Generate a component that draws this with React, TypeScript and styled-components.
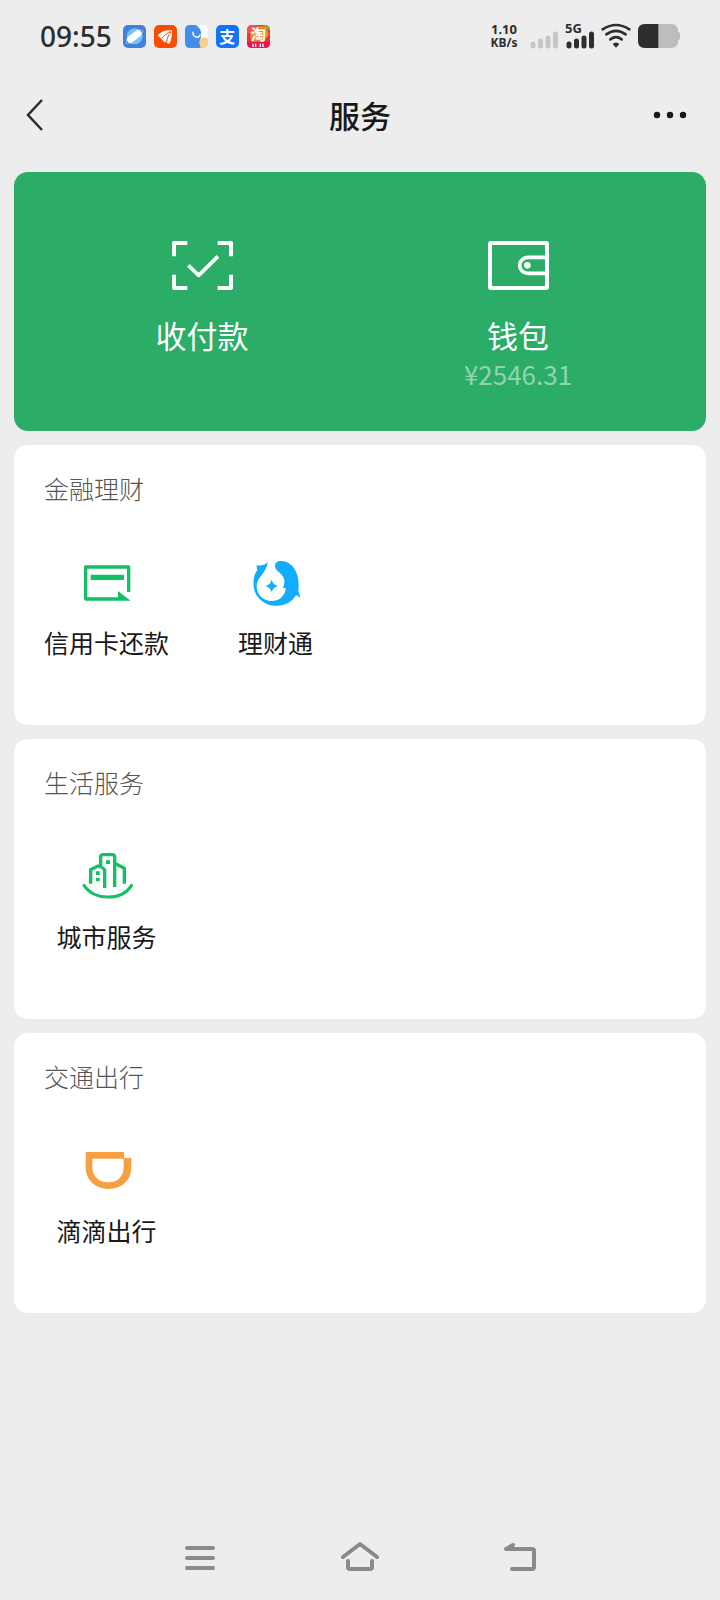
import React from "react";
import styled, { createGlobalStyle } from "styled-components";

const GlobalStyle = createGlobalStyle`
  * { box-sizing: border-box; }
  body {
    margin: 0;
    background: #ededed;
    color: #191919;
    font-family: "Noto Sans CJK SC", "Noto Sans", sans-serif;
  }
  button { border: 0; padding: 0; background: none; color: inherit; font: inherit; cursor: pointer; }
  a { color: inherit; text-decoration: none; }
  svg { display: block; overflow: visible; }
`;

const Page = styled.div`
  min-height: 100vh;
  display: flex;
  flex-direction: column;
`;

const StatusBar = styled.div`
  height: 72px;
  padding: 0 40px;
  display: flex;
  align-items: center;
  justify-content: space-between;
  color: #2e2e2e;
`;

const StatusGroup = styled.div<{ $gap: number }>`
  display: flex;
  align-items: center;
  gap: ${(p) => p.$gap}px;
`;

const Clock = styled.time`
  font: 500 28px/36px "Noto Sans", sans-serif;
  margin-right: 3px;
`;

const AppBadge = styled.span<{ $bg: string }>`
  width: 23px;
  height: 23px;
  border-radius: 5px;
  background: ${(p) => p.$bg};
  color: #fff;
  font-size: 16px;
  font-weight: 700;
  line-height: 23px;
  text-align: center;
`;

const NetSpeed = styled.div`
  width: 28px;
  margin-right: 4px;
  font-family: "Noto Sans", sans-serif;
  font-weight: 700;
  text-align: center;
`;

const SpeedLine = styled.div<{ $size: number }>`
  font-size: ${(p) => p.$size}px;
  line-height: 13px;
`;

const Header = styled.header`
  height: 86px;
  display: grid;
  grid-template-columns: 1fr auto 1fr;
  align-items: center;
`;

const Title = styled.h1`
  margin: 0;
  font-size: 31px;
  line-height: 40px;
  font-weight: 500;
`;

const BackButton = styled.button`
  justify-self: start;
  margin-left: 24px;
`;

const MoreButton = styled.button`
  justify-self: end;
  margin-right: 34px;
`;

const Main = styled.main`
  flex: 1;
  padding: 14px;
  display: flex;
  flex-direction: column;
  gap: 14px;
`;

const PayCard = styled.section`
  min-height: 259px;
  padding: 69px 30px 0;
  display: grid;
  grid-template-columns: 1fr 1fr;
  border-radius: 14px;
  background: #2bad67;
  color: #fff;
`;

const PayLink = styled.a`
  display: flex;
  flex-direction: column;
  align-items: center;
`;

const PayLabel = styled.span`
  margin-top: 25px;
  font-size: 31px;
  line-height: 40px;
`;

const Amount = styled.span`
  font-size: 26px;
  line-height: 38px;
  color: #91d4ae;
`;

const Card = styled.section`
  padding: 25px 8px 65px;
  border-radius: 14px;
  background: #fff;
`;

const CardTitle = styled.h2`
  margin: 0 0 53px;
  padding-left: 22px;
  font-size: 25px;
  line-height: 36px;
  font-weight: 300;
  color: #555;
`;

const ServiceGrid = styled.div`
  display: grid;
  grid-template-columns: repeat(4, 1fr);
`;

const ServiceLink = styled.a`
  display: flex;
  flex-direction: column;
  align-items: center;
  gap: 17px;
  font-size: 25px;
  line-height: 36px;
  white-space: nowrap;
`;

const NavBar = styled.nav`
  height: 86px;
  display: flex;
  justify-content: center;
`;

const NavButton = styled.button`
  width: 160px;
  display: flex;
  align-items: center;
  justify-content: center;
`;

const BrowserIcon = () => (
  <svg width="23" height="23" viewBox="0 0 69 69">
    <circle cx="35" cy="34" r="24" fill="#6fc4fa" />
    <ellipse cx="34" cy="35" rx="31" ry="9" fill="none" stroke="#a9d5fb" strokeWidth="2" transform="rotate(-38 34 35)" />
    <rect x="9" y="24" width="50" height="21" rx="10" fill="#fff" transform="rotate(-38 34 35)" />
  </svg>
);

const WingIcon = () => (
  <svg width="23" height="23" viewBox="0 0 69 69">
    <path d="M11 31C20 19 36 14 54 16C55 30 52 42 49 51C47 59 39 58 39 50C36 54 28 51 25 44C18 38 15 36 11 31Z" fill="#fff" />
    <path d="M23 40C31 31 39 25 50 19M38 52C39 40 43 31 51 21" fill="none" stroke="#fa4b05" strokeWidth="3" />
  </svg>
);

const AssistantIcon = () => (
  <svg width="23" height="23" viewBox="0 0 69 69">
    <path d="M15 0H32C46 6 52 24 47 40C43 50 43 58 48 69H15Q0 69 0 54V15Q0 0 15 0Z" fill="#438ee8" />
    <path d="M45 42C52 36 62 36 69 42V54Q69 69 54 69H48C43 59 43 51 45 42Z" fill="#f8cf88" />
    <path d="M24 20C22 38 42 42 46 28" fill="none" stroke="#fff" strokeWidth="4" />
  </svg>
);

const SaleIcon = () => (
  <svg width="23" height="23" viewBox="0 0 69 69">
    <path d="M15 0H30L0 30V15Q0 0 15 0Z" fill="#f44c62" />
    <path d="M48 0H54Q69 0 69 15V18Z" fill="#65b832" />
    <path d="M8 22L30 4H58L66 30L46 50H14Z" fill="#f38a2a" />
    <text x="34" y="44" fontSize="46" fontWeight="700" textAnchor="middle" fill="#fff">淘</text>
    <path d="M0 50H69V54Q69 69 54 69H15Q0 69 0 54Z" fill="#e41757" />
    <path d="M18 56V66M26 56V66M40 56V66M48 56V66" stroke="#fff" strokeWidth="4" />
  </svg>
);

const Bars = ({ color, label }: { color: string; label?: string }) => (
  <svg width="28" height="26" viewBox="0 0 28 26">
    <path d="M3 21V23M10.500 18V23M18 15V23M25.500 11V23" stroke={color} strokeWidth="5" strokeLinecap="round" />
    {label && (
      <text x="-1" y="10" fontFamily="Noto Sans" fontSize="13" fontWeight="700" fill={color}>{label}</text>
    )}
  </svg>
);

const WifiIcon = () => (
  <svg width="28" height="24" viewBox="0 0 84 72" fill="none" stroke="#2e2e2e" strokeWidth="8" strokeLinecap="round">
    <path d="M2 16Q42 -10 82 16M13 31Q42 10 71 31M25 46Q42 33 59 46" />
    <path d="M32 60Q42 51 52 60L42 71Z" fill="#2e2e2e" stroke="none" />
  </svg>
);

const BatteryIcon = () => (
  <svg width="42" height="24" viewBox="0 0 126 72">
    <path d="M60 0H100Q116 0 120 16V23Q126 24 126 30V42Q126 48 120 49V56Q116 72 100 72H60Z" fill="#bdbdbd" />
    <path d="M61 0V72H20Q0 72 0 52V20Q0 0 20 0Z" fill="#2e2e2e" />
  </svg>
);

const ScanIcon = () => (
  <svg width="61" height="49" viewBox="0 0 183 147" fill="none" stroke="#fff" strokeWidth="12" strokeLinejoin="round">
    <path d="M46 6H6V46M137 6H177V46M46 141H6V101M137 141H177V101" />
    <path d="M49 73L80 103L138 46" strokeWidth="11" />
  </svg>
);

const WalletIcon = () => (
  <svg width="61" height="49" viewBox="0 0 183 147" fill="none" stroke="#fff" strokeWidth="12">
    <rect x="6" y="6" width="171" height="135" rx="3" />
    <path d="M177 49H119A24 24 0 0 0 119 97H177" strokeWidth="11" />
    <circle cx="118" cy="73" r="10" fill="#fff" stroke="none" />
  </svg>
);

const RepayIcon = () => (
  <svg width="48" height="48" viewBox="39 25 144 144">
    <path d="M144 145H47V49H176V124" fill="none" stroke="#14bf66" strokeWidth="10" strokeLinejoin="round" />
    <path d="M62 72H162V88H62ZM144 121L182 150H144Z" fill="#14bf66" />
  </svg>
);

const WealthIcon = () => (
  <svg width="48" height="48" viewBox="37 27 144 144" fill="#12adff">
    <path d="M84 36C76 45 65 48 50 46L53 61C43 73 40 88 42 108C45 145 77 169 112 167C137 167 157 156 169 136C174 137 178 140 180 144C181 136 179 129 176 123C182 80 165 34 124 33C108 33 104 43 107 53C112 67 132 71 134 91C135 102 132 109 129 115L138 113C138 136 119 153 96 153C70 153 51 134 51 109C51 80 81 71 84 36Z" />
    <path d="M96 96Q99 104 108 108Q99 112 96 120Q93 112 84 108Q93 104 96 96Z" stroke="#12adff" strokeWidth="5" />
  </svg>
);

const CityIcon = () => (
  <svg width="48" height="48" viewBox="39 39 144 144" fill="none" stroke="#14bf66" strokeWidth="10" strokeLinejoin="round">
    <path d="M62 131V89L84 78Q103 84 104 91V144" />
    <path d="M92 80V51Q92 44 99 44H127Q134 44 134 51V141" />
    <path d="M134 70L163 85V131" />
    <path d="M42 136C72 182 154 184 185 136" strokeWidth="9" strokeLinecap="round" />
    <path d="M78 94H89V105H78ZM78 113H89V124H78ZM108 61H120V72H108Z" fill="#14bf66" stroke="none" />
  </svg>
);

const RideIcon = () => (
  <svg width="48" height="48" viewBox="39 21 144 144">
    <path fillRule="evenodd" d="M50 36H162V54H184V82C184 122 154 147 116 147C77 147 47 121 47 82V39Q47 36 50 36ZM67 56V82C67 110 87 127 115 127C143 127 161 110 161 82V56Z" fill="#f7a041" />
  </svg>
);

const sections = [
  { title: "金融理财", items: [{ name: "信用卡还款", Icon: RepayIcon }, { name: "理财通", Icon: WealthIcon }] },
  { title: "生活服务", items: [{ name: "城市服务", Icon: CityIcon }] },
  { title: "交通出行", items: [{ name: "滴滴出行", Icon: RideIcon }] },
];

export default function App() {
  return (
    <Page>
      <GlobalStyle />
      <StatusBar>
        <StatusGroup $gap={8}>
          <Clock>09:55</Clock>
          <AppBadge $bg="#437fdc"><BrowserIcon /></AppBadge>
          <AppBadge $bg="#fa4b05"><WingIcon /></AppBadge>
          <AppBadge $bg="#fafafa"><AssistantIcon /></AppBadge>
          <AppBadge $bg="#1472f6">支</AppBadge>
          <AppBadge $bg="#ee3432"><SaleIcon /></AppBadge>
        </StatusGroup>
        <StatusGroup $gap={8}>
          <NetSpeed>
            <SpeedLine $size={13}>1.10</SpeedLine>
            <SpeedLine $size={12}>KB/s</SpeedLine>
          </NetSpeed>
          <Bars color="#c6c6c6" />
          <Bars color="#2e2e2e" label="5G" />
          <WifiIcon />
          <BatteryIcon />
        </StatusGroup>
      </StatusBar>
      <Header>
        <BackButton aria-label="返回">
          <svg width="20" height="32" viewBox="0 0 20 32" fill="none" stroke="#2b2b2b" strokeWidth="2.500">
            <path d="M18 1L4 16L18 31" />
          </svg>
        </BackButton>
        <Title>服务</Title>
        <MoreButton aria-label="更多">
          <svg width="32" height="8" viewBox="0 0 32 8" fill="#191919">
            <circle cx="3" cy="4" r="3.200" />
            <circle cx="16" cy="4" r="3.200" />
            <circle cx="29" cy="4" r="3.200" />
          </svg>
        </MoreButton>
      </Header>
      <Main>
        <PayCard>
          <PayLink href="#pay">
            <ScanIcon />
            <PayLabel>收付款</PayLabel>
          </PayLink>
          <PayLink href="#wallet">
            <WalletIcon />
            <PayLabel>钱包</PayLabel>
            <Amount>¥2546.31</Amount>
          </PayLink>
        </PayCard>
        {sections.map(({ title, items }) => (
          <Card key={title}>
            <CardTitle>{title}</CardTitle>
            <ServiceGrid>
              {items.map(({ name, Icon }) => (
                <ServiceLink key={name} href="#service">
                  <Icon />
                  {name}
                </ServiceLink>
              ))}
            </ServiceGrid>
          </Card>
        ))}
      </Main>
      <NavBar>
        <NavButton aria-label="最近任务">
          <svg width="30" height="30" viewBox="0 0 30 30" stroke="#8a8a8a" strokeWidth="4" strokeLinecap="round">
            <path d="M2 6H28M2 16H28M2 26H28" />
          </svg>
        </NavButton>
        <NavButton aria-label="主页">
          <svg width="38" height="30" viewBox="0 0 38 30" fill="none" stroke="#8a8a8a" strokeWidth="4" strokeLinecap="round" strokeLinejoin="round">
            <path d="M2 15L19 2L36 15M7 19V25Q7 27 9 27H29Q31 27 31 25V19" />
          </svg>
        </NavButton>
        <NavButton aria-label="返回上一页">
          <svg width="32" height="30" viewBox="0 0 32 30" fill="none" stroke="#8a8a8a" strokeWidth="4" strokeLinecap="round" strokeLinejoin="round">
            <path d="M9 3L2 7H28Q30 7 30 9V25Q30 27 28 27H8" />
          </svg>
        </NavButton>
      </NavBar>
    </Page>
  );
}
